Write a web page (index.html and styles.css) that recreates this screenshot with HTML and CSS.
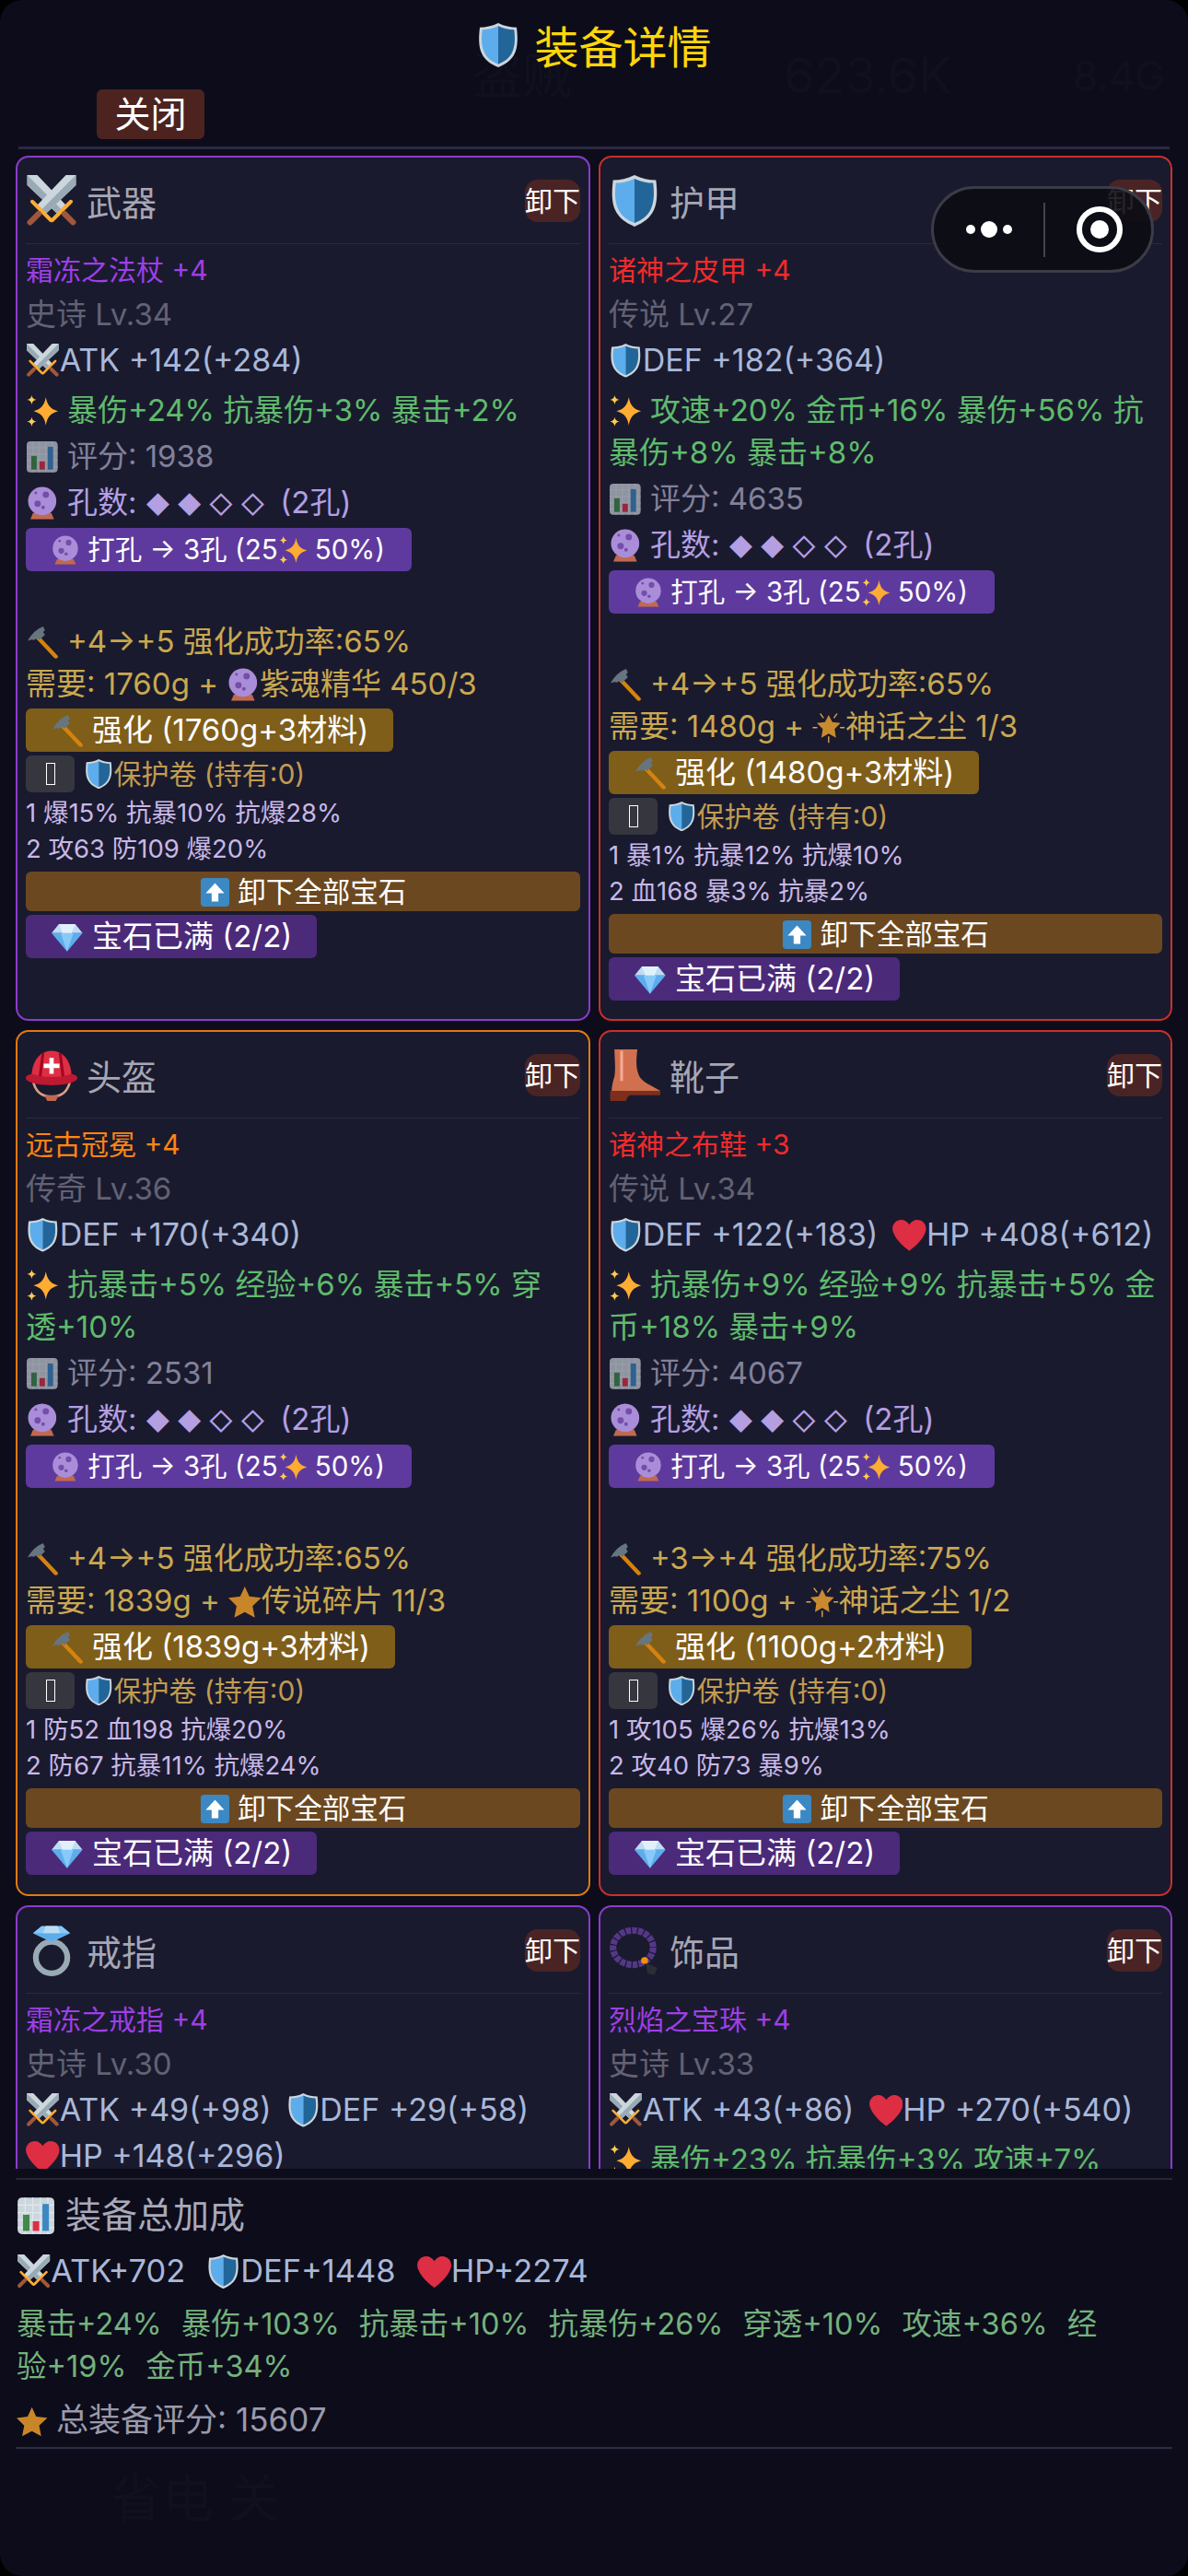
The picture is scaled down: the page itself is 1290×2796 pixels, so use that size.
FILE: index.html
```html
<!DOCTYPE html>
<html lang="zh-CN">
<head>
    <meta charset="UTF-8">
    <meta name="viewport" content="width=device-width, initial-scale=1.0">
    <title>装备详情</title>
    <link rel="stylesheet" href="styles.css">
</head>
<body>
    <!-- emoji set, no emoji font on the box -->
    <svg class="defs" width="0" height="0">
        <symbol id="i-shield" viewBox="0 0 36 36">
            <path fill="#ccd6dd" d="M18 0C13 2.500 8 3.500 3 3.500 2 12 2 19 4.500 24.500 7 30 12 33.500 18 36c6-2.500 11-6 13.500-11.500C34 19 34 12 33 3.500 28 3.500 23 2.500 18 0z"/>
            <path fill="#5dadec" d="M18 2.500C14 4.500 9 5.500 5 5.500c-.8 7-.8 13 1.500 18C8.500 28.500 13 31.500 18 33.500z"/>
            <path fill="#226699" d="M18 2.500c4 2 9 3 13 3 .8 7 .8 13-1.500 18C27.500 28.500 23 31.500 18 33.500z"/>
        </symbol>
        <symbol id="i-sword-half" viewBox="0 0 36 36">
            <path fill="#ccd6dd" d="M1 0h7l21 22-6 6L1 7z"/>
            <path fill="#99aab5" d="M1 0l25 25-3 3L1 7z"/>
            <path stroke="#ffac33" stroke-width="2.600" stroke-linecap="round" d="M18.500 31.500l13-13"/>
            <path stroke="#a0583a" stroke-width="4" stroke-linecap="round" d="M27 27l6 6"/>
        </symbol>
        <symbol id="i-swords" viewBox="0 0 36 36">
            <use href="#i-sword-half"/>
            <g transform="matrix(-1 0 0 1 36 0)"><use href="#i-sword-half"/></g>
        </symbol>
        <symbol id="i-spark" viewBox="0 0 36 36">
            <path fill="#ffac33" d="M22 3c1.500 9 5 13 13.500 15.500C27 21 23.500 25 22 34c-1.500-9-5-13-13.500-15.500C17 16 20.500 12 22 3z"/>
            <path fill="#ffcc4d" d="M6.500 1c.6 3 1.800 4.400 5 5-3.200.6-4.400 2-5 5-.6-3-1.800-4.400-5-5 3.200-.6 4.400-2 5-5zM6.500 25c.6 3 1.800 4.400 5 5-3.200.6-4.400 2-5 5-.6-3-1.800-4.400-5-5 3.200-.6 4.400-2 5-5z"/>
        </symbol>
        <symbol id="i-chart" viewBox="0 0 36 36">
            <rect x="1" y="1" width="34" height="34" rx="4" fill="#ccd6dd"/>
            <path stroke="#e1e8ed" stroke-width="1" d="M1 8h34M1 15h34M1 22h34M1 29h34M8 1v34M15 1v34M22 1v34M29 1v34"/>
            <rect x="6" y="17" width="6" height="15" fill="#3e8a47"/>
            <rect x="15" y="23" width="6" height="9" fill="#dd2e44"/>
            <rect x="24" y="7" width="6" height="25" fill="#3b88c3"/>
        </symbol>
        <symbol id="i-orb" viewBox="0 0 36 36">
            <path fill="#c1694f" d="M8 29h20l3 7H5z"/>
            <circle cx="18" cy="16" r="15.500" fill="#aa8dd8"/>
            <circle cx="22" cy="9" r="3.500" fill="#744eaa"/>
            <circle cx="13" cy="19" r="3.500" fill="#744eaa"/>
            <circle cx="19" cy="23" r="2" fill="#744eaa"/>
            <circle cx="11" cy="7" r="1.500" fill="#744eaa"/>
        </symbol>
        <symbol id="i-hammer" viewBox="0 0 36 36">
            <path stroke="#d5820f" stroke-width="4.400" stroke-linecap="round" d="M13 13l20 21"/>
            <path fill="#66757f" d="M2 17C6 9 12 4 19 1l2 4-2 2 2 3-6 6-3-2-3 2C7 15 5 15.500 2 17z"/>
        </symbol>
        <symbol id="i-gem" viewBox="0 0 36 36">
            <path fill="#bdddf4" d="M9 4h18l8 10H1z"/>
            <path fill="#5dadec" d="M1 14h34L18 34z"/>
            <path fill="#88c9f9" d="M11 14h14l-7 20z"/>
            <path fill="#e1f1fc" d="M9 4l4 10h10l4-10z"/>
        </symbol>
        <symbol id="i-up" viewBox="0 0 36 36">
            <rect x="1" y="1" width="34" height="34" rx="4" fill="#3b88c3"/>
            <path fill="#fff" d="M18 7l11 12h-7v10h-8V19H7z"/>
        </symbol>
        <symbol id="i-helmet" viewBox="0 0 36 36">
            <path fill="none" stroke="#d99e82" stroke-width="1.800" d="M5 21c1 8 6 12 13 12s12-4 13-12"/>
            <path fill="#c1694f" d="M13 32h10l-2 4h-6z"/>
            <path fill="#dd2e44" d="M4 20C4 8 10 1 18 1s14 7 14 19z"/>
            <path fill="#a0041e" d="M11 3l-2 16h2l2-17zM25 3l2 16h-2L23 2z"/>
            <path fill="#be1931" d="M0 20c0-2 2-2 4-3 8 3 20 3 28 0 2 1 4 1 4 3 0 3-8 5-18 5S0 23 0 20z"/>
            <path fill="#fff" d="M16.500 6h3v4h4v3h-4v4h-3v-4h-4v-3h4z"/>
        </symbol>
        <symbol id="i-boot" viewBox="0 0 36 36">
            <path fill="#d1704f" d="M4 0h16c-1 8-1 13 1 18s9 7 15 11v1H2c0-4 1-8 2-11 1-6 0-13 0-19z"/>
            <path fill="#f4ab92" d="M8 1h2v21H8z"/>
            <path fill="#7c2f1c" d="M1 29h35v3H16c-2 0-3 1-4 4H1z"/>
        </symbol>
        <symbol id="i-ring" viewBox="0 0 36 36">
            <circle cx="18" cy="23" r="11" fill="none" stroke="#99aab5" stroke-width="4"/>
            <path fill="#88c9f9" d="M11 1h14l6 5-13 6L5 6z"/>
            <path fill="#5dadec" d="M5 6h26l-13 6z"/>
            <path fill="#bdddf4" d="M14 1h8l2 5H12z"/>
        </symbol>
        <symbol id="i-beads" viewBox="0 0 36 36">
            <ellipse cx="17" cy="16" rx="14" ry="12" fill="none" stroke="#553788" stroke-width="4.600" stroke-dasharray="3.500 .8"/>
            <circle cx="25" cy="25" r="2.400" fill="#f4900c"/>
            <path fill="#292f33" d="M26 27l8 3-2 5-5-1z"/>
        </symbol>
        <symbol id="i-heart" viewBox="0 0 36 36">
            <path fill="#dd2e44" d="M35.900 11.500C35.900 6 31.500 2 26.500 2 23 2 20 4 18 7c-2-3-5-5-8.500-5C4.500 2 .1 6 .1 11.500.1 13 .4 14.200 1 15.400 4 24 14 32 18 35c4-3 14-11 17-19.600.6-1.200.9-2.400.9-3.900z"/>
        </symbol>
        <symbol id="i-star" viewBox="0 0 36 36">
            <path fill="#c98628" d="M18 2l5 11 13 1.500-9.500 9 2.500 12.500L18 30 6.500 36 9 23.500 0 14.500 13 13z"/>
        </symbol>
        <symbol id="i-glow" viewBox="0 0 36 36">
            <path fill="#c98a2f" d="M18 5l4 8 9 1-6.500 6.500L26 30l-8-4.500L10 30l1.500-9.500L5 14l9-1z"/>
            <path stroke="#d9a850" stroke-width="1.400" stroke-linecap="round" d="M18 29v6M9 4l3 4M27 4l-3 4M1 19h4M31 19h4"/>
        </symbol>
    </svg>

    <div class="screen">
        <!-- page under the dialog, barely visible -->
        <div class="ghost g1">盗贼</div>
        <div class="ghost g2">623.6K</div>
        <div class="ghost g3">8.4G</div>
        <div class="ghost g5">省电 关</div>

        <div class="capsule">
            <div class="dots"><i></i><i class="big"></i><i></i></div>
            <div class="capsule-line"></div>
            <div class="target"><i></i></div>
        </div>

        <div class="top">
            <h1 class="title"><svg class="title-icon"><use href="#i-shield"/></svg>装备详情</h1>
            <button class="close">关闭</button>
        </div>

        <div class="grid">
            <section class="card epic">
                <div class="head"><svg class="slot"><use href="#i-swords"/></svg><span class="slot-name">武器</span><button class="off">卸下</button></div>
                <div class="name">霜冻之法杖 +4</div>
                <div class="rarity">史诗 Lv.34</div>
                <div class="stat"><svg class="ic"><use href="#i-swords"/></svg>ATK +142(+284)</div>
                <div class="bonus"><svg class="ic"><use href="#i-spark"/></svg> 暴伤+24% 抗暴伤+3% 暴击+2%</div>
                <div class="score"><svg class="ic"><use href="#i-chart"/></svg> 评分: 1938</div>
                <div class="holes"><svg class="ic"><use href="#i-orb"/></svg> 孔数: <span class="slots">◆◆◇◇</span> (2孔)</div>
                <button class="btn punch"><svg class="ic"><use href="#i-orb"/></svg> 打孔 → 3孔 (25<svg class="ic"><use href="#i-spark"/></svg> 50%)</button>
                <div class="rate"><svg class="ic"><use href="#i-hammer"/></svg> +4→+5 强化成功率:65%</div>
                <div class="need">需要: 1760g + <svg class="ic"><use href="#i-orb"/></svg>紫魂精华 450/3</div>
                <button class="btn up"><svg class="ic"><use href="#i-hammer"/></svg> 强化 (1760g+3材料)</button>
                <div class="protect"><span class="check"><i></i></span><svg class="ic"><use href="#i-shield"/></svg>保护卷 (持有:0)</div>
                <div class="gem first">1 爆15% 抗暴10% 抗爆28%</div>
                <div class="gem">2 攻63 防109 爆20%</div>
                <button class="btn all"><svg class="ic"><use href="#i-up"/></svg> 卸下全部宝石</button>
                <button class="btn full"><svg class="ic"><use href="#i-gem"/></svg> 宝石已满 (2/2)</button>
            </section>

            <section class="card legend">
                <div class="head"><svg class="slot"><use href="#i-shield"/></svg><span class="slot-name">护甲</span><button class="off">卸下</button></div>
                <div class="name">诸神之皮甲 +4</div>
                <div class="rarity">传说 Lv.27</div>
                <div class="stat"><svg class="ic"><use href="#i-shield"/></svg>DEF +182(+364)</div>
                <div class="bonus"><svg class="ic"><use href="#i-spark"/></svg> 攻速+20% 金币+16% 暴伤+56% 抗暴伤+8% 暴击+8%</div>
                <div class="score"><svg class="ic"><use href="#i-chart"/></svg> 评分: 4635</div>
                <div class="holes"><svg class="ic"><use href="#i-orb"/></svg> 孔数: <span class="slots">◆◆◇◇</span> (2孔)</div>
                <button class="btn punch"><svg class="ic"><use href="#i-orb"/></svg> 打孔 → 3孔 (25<svg class="ic"><use href="#i-spark"/></svg> 50%)</button>
                <div class="rate"><svg class="ic"><use href="#i-hammer"/></svg> +4→+5 强化成功率:65%</div>
                <div class="need">需要: 1480g + <svg class="ic"><use href="#i-glow"/></svg>神话之尘 1/3</div>
                <button class="btn up"><svg class="ic"><use href="#i-hammer"/></svg> 强化 (1480g+3材料)</button>
                <div class="protect"><span class="check"><i></i></span><svg class="ic"><use href="#i-shield"/></svg>保护卷 (持有:0)</div>
                <div class="gem first">1 暴1% 抗暴12% 抗爆10%</div>
                <div class="gem">2 血168 暴3% 抗暴2%</div>
                <button class="btn all"><svg class="ic"><use href="#i-up"/></svg> 卸下全部宝石</button>
                <button class="btn full"><svg class="ic"><use href="#i-gem"/></svg> 宝石已满 (2/2)</button>
            </section>

            <section class="card myth">
                <div class="head"><svg class="slot"><use href="#i-helmet"/></svg><span class="slot-name">头盔</span><button class="off">卸下</button></div>
                <div class="name">远古冠冕 +4</div>
                <div class="rarity">传奇 Lv.36</div>
                <div class="stat"><svg class="ic"><use href="#i-shield"/></svg>DEF +170(+340)</div>
                <div class="bonus"><svg class="ic"><use href="#i-spark"/></svg> 抗暴击+5% 经验+6% 暴击+5% 穿<br>透+10%</div>
                <div class="score"><svg class="ic"><use href="#i-chart"/></svg> 评分: 2531</div>
                <div class="holes"><svg class="ic"><use href="#i-orb"/></svg> 孔数: <span class="slots">◆◆◇◇</span> (2孔)</div>
                <button class="btn punch"><svg class="ic"><use href="#i-orb"/></svg> 打孔 → 3孔 (25<svg class="ic"><use href="#i-spark"/></svg> 50%)</button>
                <div class="rate"><svg class="ic"><use href="#i-hammer"/></svg> +4→+5 强化成功率:65%</div>
                <div class="need">需要: 1839g + <svg class="ic"><use href="#i-star"/></svg>传说碎片 11/3</div>
                <button class="btn up"><svg class="ic"><use href="#i-hammer"/></svg> 强化 (1839g+3材料)</button>
                <div class="protect"><span class="check"><i></i></span><svg class="ic"><use href="#i-shield"/></svg>保护卷 (持有:0)</div>
                <div class="gem first">1 防52 血198 抗爆20%</div>
                <div class="gem">2 防67 抗暴11% 抗爆24%</div>
                <button class="btn all"><svg class="ic"><use href="#i-up"/></svg> 卸下全部宝石</button>
                <button class="btn full"><svg class="ic"><use href="#i-gem"/></svg> 宝石已满 (2/2)</button>
            </section>

            <section class="card legend">
                <div class="head"><svg class="slot"><use href="#i-boot"/></svg><span class="slot-name">靴子</span><button class="off">卸下</button></div>
                <div class="name">诸神之布鞋 +3</div>
                <div class="rarity">传说 Lv.34</div>
                <div class="stat nowrap"><svg class="ic"><use href="#i-shield"/></svg>DEF +122(+183)<span class="next"><svg class="ic"><use href="#i-heart"/></svg>HP +408(+612)</span></div>
                <div class="bonus"><svg class="ic"><use href="#i-spark"/></svg> 抗暴伤+9% 经验+9% 抗暴击+5% 金币+18% 暴击+9%</div>
                <div class="score"><svg class="ic"><use href="#i-chart"/></svg> 评分: 4067</div>
                <div class="holes"><svg class="ic"><use href="#i-orb"/></svg> 孔数: <span class="slots">◆◆◇◇</span> (2孔)</div>
                <button class="btn punch"><svg class="ic"><use href="#i-orb"/></svg> 打孔 → 3孔 (25<svg class="ic"><use href="#i-spark"/></svg> 50%)</button>
                <div class="rate"><svg class="ic"><use href="#i-hammer"/></svg> +3→+4 强化成功率:75%</div>
                <div class="need">需要: 1100g + <svg class="ic"><use href="#i-glow"/></svg>神话之尘 1/2</div>
                <button class="btn up"><svg class="ic"><use href="#i-hammer"/></svg> 强化 (1100g+2材料)</button>
                <div class="protect"><span class="check"><i></i></span><svg class="ic"><use href="#i-shield"/></svg>保护卷 (持有:0)</div>
                <div class="gem first">1 攻105 爆26% 抗爆13%</div>
                <div class="gem">2 攻40 防73 暴9%</div>
                <button class="btn all"><svg class="ic"><use href="#i-up"/></svg> 卸下全部宝石</button>
                <button class="btn full"><svg class="ic"><use href="#i-gem"/></svg> 宝石已满 (2/2)</button>
            </section>

            <section class="card epic">
                <div class="head"><svg class="slot"><use href="#i-ring"/></svg><span class="slot-name">戒指</span><button class="off">卸下</button></div>
                <div class="name">霜冻之戒指 +4</div>
                <div class="rarity">史诗 Lv.30</div>
                <div class="stat"><svg class="ic"><use href="#i-swords"/></svg>ATK +49(+98)<span class="next"><svg class="ic"><use href="#i-shield"/></svg>DEF +29(+58)</span></div>
                <div class="stat"><svg class="ic"><use href="#i-heart"/></svg>HP +148(+296)</div>
            </section>

            <section class="card epic">
                <div class="head"><svg class="slot"><use href="#i-beads"/></svg><span class="slot-name">饰品</span><button class="off">卸下</button></div>
                <div class="name">烈焰之宝珠 +4</div>
                <div class="rarity">史诗 Lv.33</div>
                <div class="stat"><svg class="ic"><use href="#i-swords"/></svg>ATK +43(+86)<span class="next"><svg class="ic"><use href="#i-heart"/></svg>HP +270(+540)</span></div>
                <div class="bonus"><svg class="ic"><use href="#i-spark"/></svg> 暴伤+23% 抗暴伤+3% 攻速+7%</div>
            </section>
        </div>

        <div class="sum">
            <div class="sum-title"><svg class="ic"><use href="#i-chart"/></svg> 装备总加成</div>
            <div class="sum-stats"><span><svg class="ic"><use href="#i-swords"/></svg>ATK+702</span><span><svg class="ic"><use href="#i-shield"/></svg>DEF+1448</span><span><svg class="ic"><use href="#i-heart"/></svg>HP+2274</span></div>
            <div class="sum-bonus"><span>暴击+24%</span><span>暴伤+103%</span><span>抗暴击+10%</span><span>抗暴伤+26%</span><span>穿透+10%</span><span>攻速+36%</span><span>经</span><br><span>验+19%</span><span>金币+34%</span></div>
            <div class="sum-score"><svg class="ic"><use href="#i-star"/></svg> 总装备评分: 15607</div>
        </div>
    </div>
</body>
</html>
```

FILE: styles.css
```css
* {
    box-sizing: border-box;
}
body {
    margin: 0;
    background: #000;
    font-family: "Inter", "Noto Sans CJK SC", sans-serif;
}
button {
    font-family: inherit;
    border: 0;
    padding: 0;
    color: #fff;
}
.defs {
    position: absolute;
}
.screen {
    position: relative;
    width: 1290px;
    height: 2796px;
    overflow: hidden;
    background: #0d0c1b;
    border-radius: 24px;
}

/* ghost page */
.ghost {
    position: absolute;
    color: #11101f;
    font-size: 54px;
    line-height: 60px;
}
.g1 { left: 513px; top: 53px; }
.g2 { left: 851px; top: 52px; }
.g3 { left: 1165px; top: 52px; font-size: 44px; }
.g5 { left: 120px; top: 2682px; font-size: 56px; }

/* wechat capsule */
.capsule {
    position: absolute;
    left: 1011px;
    top: 202px;
    width: 242px;
    height: 94px;
    z-index: 5;
    display: flex;
    align-items: center;
    background: rgba(12, 12, 20, 0.9);
    border: 3px solid #3c3c48;
    border-radius: 47px;
}
.dots {
    width: 119px;
    display: flex;
    justify-content: center;
    align-items: center;
    gap: 6px;
}
.dots i {
    width: 10px;
    height: 10px;
    border-radius: 50%;
    background: #fff;
}
.dots .big {
    width: 18px;
    height: 18px;
}
.capsule-line {
    width: 2px;
    height: 59px;
    background: #44444e;
}
.target {
    margin-left: 34px;
    width: 50px;
    height: 50px;
    border: 6px solid #fff;
    border-radius: 50%;
    display: flex;
    align-items: center;
    justify-content: center;
}
.target i {
    width: 20px;
    height: 20px;
    border-radius: 50%;
    background: #fff;
}

/* top */
.top {
    position: relative;
    height: 169px;
    padding-top: 22px;
}
.top::after {
    content: "";
    position: absolute;
    left: 20px;
    right: 20px;
    top: 159px;
    height: 3px;
    background: #2b2942;
}
.title {
    margin: 0;
    height: 60px;
    display: flex;
    align-items: center;
    justify-content: center;
    font-size: 48px;
    font-weight: 400;
    line-height: 60px;
    color: #ffd60a;
}
.title-icon {
    width: 48px;
    height: 50px;
    margin: 0 15px 6px 0;
}
.close {
    display: block;
    margin: 15px 0 0 105px;
    width: 117px;
    height: 54px;
    background: #4d2320;
    border-radius: 6px;
    font-size: 39px;
    line-height: 54px;
}

/* cards */
.grid {
    position: relative;
    height: 2185px;
    overflow: hidden;
    padding: 0 17px;
    display: grid;
    grid-template-columns: 624px 623px;
    grid-template-rows: 939px 940px 400px;
    column-gap: 9px;
    row-gap: 10px;
    align-content: start;
}
.card {
    background: #1a1a2e;
    border: 2px solid #888;
    border-radius: 14px;
    padding: 0 9px;
}
.epic { border-color: #8b3ccb; }
.legend { border-color: #c9302c; }
.myth { border-color: #e07a12; }
.epic .name { color: #9e3fe6; }
.legend .name { color: #f02b2b; }
.myth .name { color: #ff8513; }

.head {
    height: 94px;
    display: flex;
    align-items: center;
    border-bottom: 1px solid #2a2a3e;
}
.slot {
    width: 56px;
    height: 58px;
    flex: none;
}
.slot-name {
    margin-left: 10px;
    font-size: 38px;
    color: #a6a6b4;
}
.off {
    margin-left: auto;
    width: 60px;
    height: 46px;
    background: #4a2425;
    border-radius: 14px;
    font-size: 30px;
    line-height: 46px;
    white-space: nowrap;
}
.ic {
    width: 1.08em;
    height: 1.08em;
    vertical-align: -0.2em;
}
.name {
    margin-top: 5px;
    font-size: 30px;
    line-height: 46px;
}
.rarity {
    font-size: 33px;
    line-height: 50px;
    color: #626274;
}
.stat {
    font-size: 34px;
    line-height: 50px;
    color: #a9b8d9;
}
.nowrap {
    white-space: nowrap;
}
.next {
    margin-left: 16px;
}
.bonus {
    margin-top: 6px;
    font-size: 33px;
    line-height: 46px;
    color: #5fbb6c;
}
.score {
    margin-top: 2px;
    font-size: 33px;
    line-height: 50px;
    color: #81819a;
}
.score .ic {
    opacity: 0.65;
}
.holes {
    height: 50px;
    font-size: 33px;
    line-height: 50px;
    color: #b39fe2;
}
.slots {
    font-size: 26px;
    line-height: 1;
    letter-spacing: 7px;
}
.btn {
    display: block;
    height: 47px;
    padding: 0 27px;
    border-radius: 6px;
    font-size: 33px;
    line-height: 47px;
    white-space: nowrap;
}
.punch {
    margin-top: 3px;
    padding: 0 29px 0 27px;
    background: #5e3a9e;
    font-size: 29.500px;
}
.rate {
    margin-top: 53px;
    font-size: 33px;
    line-height: 46px;
    color: #c9a850;
}
.need {
    font-size: 33px;
    line-height: 46px;
    color: #c9a850;
}
.up {
    margin-top: 4px;
    background: #7f5e1a;
}
.protect {
    margin-top: 4px;
    height: 40px;
    display: flex;
    align-items: center;
    font-size: 30px;
    line-height: 36px;
    color: #c09c50;
}
.check {
    width: 53px;
    height: 40px;
    margin-right: 10px;
    background: #36363f;
    border-radius: 6px;
    display: flex;
    align-items: center;
    justify-content: center;
}
.check i {
    width: 10px;
    height: 24px;
    border: 1.500px solid #fff;
}
.gem {
    font-size: 27.500px;
    line-height: 39px;
    color: #c8b8e8;
}
.first {
    margin-top: 3px;
}
.all {
    width: 100%;
    height: 43px;
    margin-top: 5px;
    line-height: 43px;
    background: #6b4820;
    font-size: 30.500px;
}
.full {
    margin-top: 4px;
    background: #4b2a7a;
}

/* total */
.sum {
    position: relative;
    margin: 10px 17px 0;
    padding: 0 1px;
    height: 294px;
    border-top: 2px solid #262636;
    border-bottom: 2px solid #2d2c42;
}
.sum-title {
    margin-top: 13px;
    font-size: 39px;
    line-height: 50px;
    color: #a9a9b9;
}
.sum-stats {
    margin-top: 11px;
    font-size: 34.400px;
    line-height: 50px;
    color: #a9b8d9;
    white-space: nowrap;
}
.sum-stats span {
    margin-right: 23px;
}
.sum-bonus {
    margin-top: 10px;
    font-size: 32.500px;
    line-height: 46px;
    color: #74b27c;
}
.sum-bonus span {
    margin-right: 21px;
}
.sum-score {
    margin-top: 9px;
    font-size: 35px;
    line-height: 50px;
    color: #9a9aaa;
}
.sum-score .ic {
    width: 0.95em;
    height: 0.95em;
    vertical-align: -0.14em;
}
```
